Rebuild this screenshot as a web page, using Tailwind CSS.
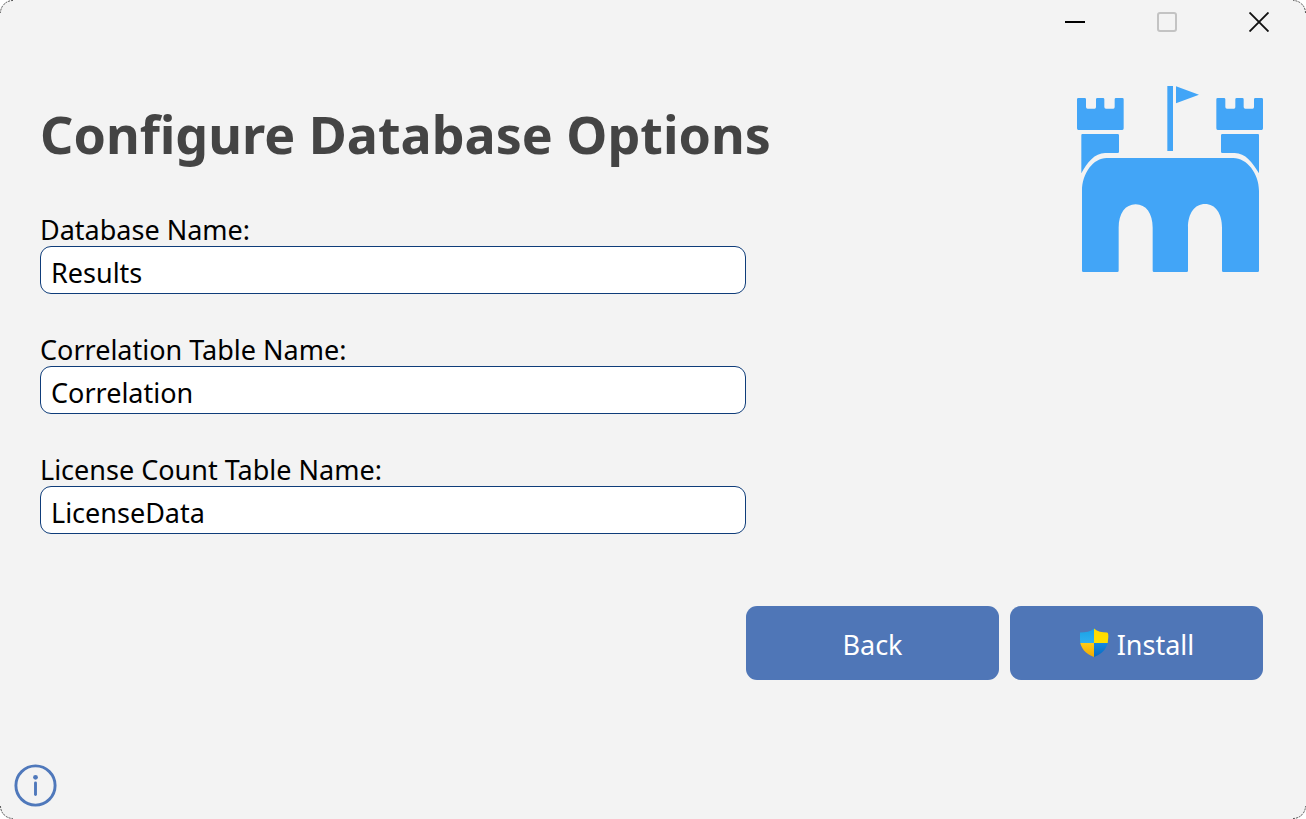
<!DOCTYPE html>
<html lang="en">
<head>
<meta charset="utf-8">
<meta name="viewport" content="width=device-width, initial-scale=1">
<title>Configure Database Options</title>
<script src="https://cdn.jsdelivr.net/npm/@tailwindcss/browser@4"></script>
</head>
<body class="bg-white">
<div class="relative flex min-h-screen flex-col bg-[#f3f3f3] font-['Segoe_UI','Noto_Sans',sans-serif] text-[27px] text-black">

  <!-- Window corners -->
  <svg class="absolute top-0 left-0 size-4" viewBox="0 0 16 16" fill="none" aria-hidden="true"><path d="M0 0H13A13 13 0 0 0 0 13Z" fill="#fff"/><path d="M13 .5A12.500 12.500 0 0 0 .5 13" stroke="#555" stroke-dasharray="2 1"/></svg>
  <svg class="absolute top-0 right-0 size-4 rotate-90" viewBox="0 0 16 16" fill="none" aria-hidden="true"><path d="M0 0H13A13 13 0 0 0 0 13Z" fill="#fff"/><path d="M13 .5A12.500 12.500 0 0 0 .5 13" stroke="#555" stroke-dasharray="2 1"/></svg>
  <svg class="absolute right-0 bottom-0 size-4 rotate-180" viewBox="0 0 16 16" fill="none" aria-hidden="true"><path d="M0 0H13A13 13 0 0 0 0 13Z" fill="#fff"/><path d="M13 .5A12.500 12.500 0 0 0 .5 13" stroke="#555" stroke-dasharray="2 1"/></svg>
  <svg class="absolute bottom-0 left-0 size-4 -rotate-90" viewBox="0 0 16 16" fill="none" aria-hidden="true"><path d="M0 0H13A13 13 0 0 0 0 13Z" fill="#fff"/><path d="M13 .5A12.500 12.500 0 0 0 .5 13" stroke="#555" stroke-dasharray="2 1"/></svg>

  <!-- Title bar -->
  <header class="flex h-11 justify-end pr-px">
    <button type="button" aria-label="Minimize" class="flex w-[92px] items-center justify-center"><svg class="size-5" viewBox="0 0 20 20" aria-hidden="true"><path d="M0 9H20V11H0Z" fill="#000"/></svg></button>
    <button type="button" aria-label="Maximize" disabled class="flex w-[92px] items-center justify-center"><svg class="size-5" viewBox="0 0 20 20" fill="none" aria-hidden="true"><rect x="1" y="1" width="18" height="18" rx="2" stroke="#c3c3c3" stroke-width="2"/></svg></button>
    <button type="button" aria-label="Close" class="flex w-[92px] items-center justify-center"><svg class="size-5" viewBox="0 0 20 20" fill="none" aria-hidden="true"><path d="M.5 .5L19.500 19.500M19.500 .5L.5 19.500" stroke="#111" stroke-width="1.900"/></svg></button>
  </header>

  <main class="grid grid-cols-[1fr_517px] pt-[42px] pr-[43px] pl-10">
    <form id="options" class="flex min-w-0 flex-col pb-[146px]">
      <h1 class="mt-3 mb-11 text-[52px] leading-[72px] font-bold whitespace-nowrap text-[#444]">Configure Database Options</h1>
      <div class="flex flex-col gap-10">
        <div class="flex flex-col">
          <label for="db" class="leading-8">Database Name:</label>
          <input id="db" type="text" value="Results" class="h-12 w-full rounded-[11px] border border-[#0f3d7a] bg-white px-[10px] pt-1 outline-none">
        </div>
        <div class="flex flex-col">
          <label for="corr" class="leading-8">Correlation Table Name:</label>
          <input id="corr" type="text" value="Correlation" class="h-12 w-full rounded-[11px] border border-[#0f3d7a] bg-white px-[10px] pt-1 outline-none">
        </div>
        <div class="flex flex-col">
          <label for="lic" class="leading-8">License Count Table Name:</label>
          <input id="lic" type="text" value="LicenseData" class="h-12 w-full rounded-[11px] border border-[#0f3d7a] bg-white px-[10px] pt-1 outline-none">
        </div>
      </div>
    </form>

    <div class="flex flex-col justify-between">
      <svg class="size-[186px] self-end" viewBox="51 48 558 558" fill="#42a5f7" role="img" aria-label="Castle logo">
        <path id="turret" d="M55 84H74Q78 84 78 88V111Q78 116 83 116H104Q108 116 108 111V88Q108 84 112 84H129Q133 84 133 88V111Q133 116 138 116H160Q164 116 164 111V88Q164 84 168 84H187Q191 84 191 88V175Q191 180 187 180H55Q51 180 51 175V88Q51 84 55 84Z"/>
        <use href="#turret" x="418"/>
        <path d="M67 192H173Q177 192 177 196V245Q177 249 173 249H135C105 249 80 278 64 310V195Q64 192 67 192Z"/>
        <path d="M594 192H487Q483 192 483 196V245Q483 249 487 249H524C556 249 578 278 597 310V195Q597 192 594 192Z"/>
        <path d="M322 48H339V243H322ZM348 49L417 74L348 100Z"/>
        <path d="M140 264H520C560 264 597 310 597 362V602Q597 606 593 606H490Q486 606 486 602V473C486 430 466 402 435 402C404 402 384 430 384 473V602Q384 606 380 606H282Q278 606 278 602V473C278 430 258 403 227 403C196 403 176 430 176 473V602Q176 606 172 606H70Q66 606 66 602V362C66 310 100 264 140 264Z"/>
      </svg>
      <div class="grid h-[74px] grid-cols-2 gap-[11px] text-white">
        <button type="button" class="rounded-[11px] bg-[#4f76b7] pt-1">Back</button>
        <button type="submit" form="options" class="flex items-center justify-center gap-2 rounded-[11px] bg-[#4f76b7]">
          <svg class="size-[30px]" viewBox="0 0 30 30" aria-hidden="true">
            <defs>
              <clipPath id="shield"><path d="M15 .5C18.500 3.500 23 4.500 28 4.500Q30 4.500 29 12C29 20 23 26 15 29C7 26 1 20 1 12V4.500C7 4.500 11.500 3.500 15 .5Z"/></clipPath>
              <linearGradient id="b1" x2="0" y2="1"><stop stop-color="#18a0e4"/><stop offset="1" stop-color="#30b0f0"/></linearGradient>
              <linearGradient id="b2" x2="0" y2="1"><stop stop-color="#1688df"/><stop offset="1" stop-color="#0768c0"/></linearGradient>
              <linearGradient id="y1" x2="0" y2="1"><stop stop-color="#ffd800"/><stop offset="1" stop-color="#ffe000"/></linearGradient>
              <linearGradient id="y2" x2="0" y2="1"><stop stop-color="#ffcc18"/><stop offset="1" stop-color="#f0a800"/></linearGradient>
            </defs>
            <g clip-path="url(#shield)"><path d="M0 0H15V15H0Z" fill="url(#b1)"/><path d="M15 0H30V15H15Z" fill="url(#y1)"/><path d="M0 15H15V30H0Z" fill="url(#y2)"/><path d="M15 15H30V30H15Z" fill="url(#b2)"/></g>
          </svg>
          <span class="pt-1">Install</span>
        </button>
      </div>
    </div>
  </main>

  <footer class="mt-auto pb-3 pl-[14px]">
    <button type="button" aria-label="Information" class="block">
      <svg class="size-[43px]" viewBox="0 0 43 43" fill="none" aria-hidden="true"><circle cx="21.500" cy="21.500" r="19.600" stroke="#4f78bb" stroke-width="2.900"/><circle cx="21.500" cy="13.300" r="2.400" fill="#4f78bb"/><path d="M21.500 19V30.500" stroke="#4f78bb" stroke-width="2.900" stroke-linecap="round"/></svg>
    </button>
  </footer>
</div>
</body>
</html>
